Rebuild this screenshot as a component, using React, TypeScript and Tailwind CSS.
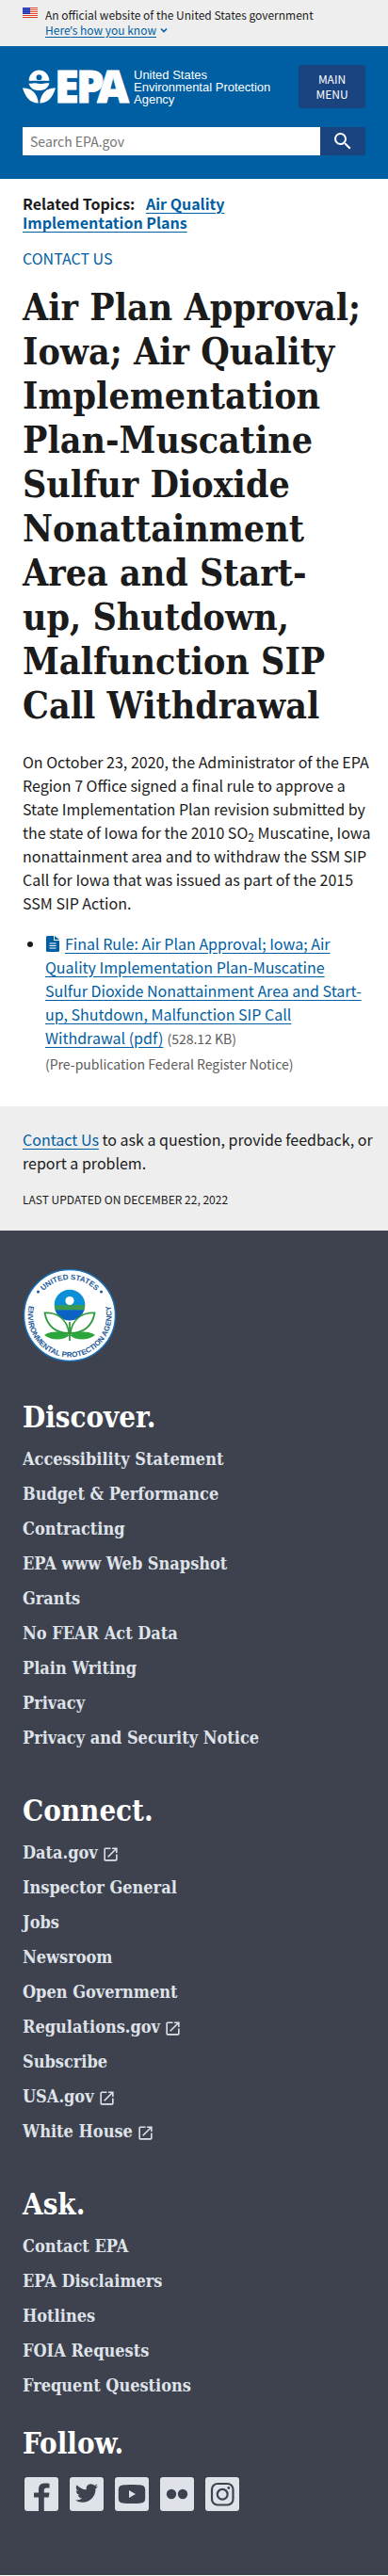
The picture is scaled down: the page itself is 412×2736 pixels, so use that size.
import type { ReactNode } from "react";

const link = "text-[#005ea2] underline underline-offset-3";

function Flag() {
  return (
    <svg className="mt-2 h-[11px] w-4 shrink-0" viewBox="0 0 16 11" aria-hidden="true">
      <rect width="16" height="11" fill="#fff" />
      {[0, 2, 4, 6, 8, 10].map((y) => (
        <rect key={y} y={y} width="16" height="1" fill="#db3e1f" />
      ))}
      <rect width="8" height="7" fill="#1e33b1" />
      {[1, 3, 5].map((y) => [1, 3, 5, 7].map((x) => <circle key={x + "-" + y} cx={x - 0.1} cy={y + 0.4} r="0.4" fill="#fff" />))}
    </svg>
  );
}

function EpaLogo() {
  return (
    <svg className="h-9 w-[115px] shrink-0 overflow-visible" viewBox="0 0 115 36" role="img" aria-label="EPA" fill="#fff">
      <path
        fillRule="evenodd"
        d="M6.500 11.500C7.500 4.500 11.500.5 17.500.5S27.500 4.500 28.500 11.500c-2 .8-4 .2-6.500.3-3 .2-5.500.2-9 0-2.300-.1-4.500.5-6.500-.3ZM17.500 5.300a3 3 0 1 0 0 6 3 3 0 1 0 0-6Z"
      />
      <path d="M6.500 14.500c2.500.8 4.500-.3 7-.2 2.800.1 4.500 1.200 7.500.6 2.500-.5 5-.9 7.500-.4C27 19.500 23.500 22 17.500 22S8 19.500 6.500 14.500Z" />
      <path d="M0 19.500C8 19 15.500 23.500 16.800 35.500 7.500 35.500 3 29 0 19.500Z" />
      <path d="M35 19.500c-8-.5-15.500 4-16.800 16 9.300 0 13.800-6.500 16.800-16Z" />
      <g fontFamily="Open Sans, Noto Sans, sans-serif" fontWeight="800" fontSize="47" stroke="#fff" strokeWidth="0.800">
        <text x="34" y="35">E</text>
        <text x="57" y="35">P</text>
        <text x="79" y="35">A</text>
      </g>
    </svg>
  );
}

function Seal() {
  return (
    <svg className="size-[100px]" viewBox="0 0 100 100" role="img" aria-label="United States Environmental Protection Agency seal">
      <defs>
        <path id="seal-top" d="M12 50a38 38 0 0 1 76 0" />
        <path id="seal-bottom" d="M12.200 26.500A44.500 44.500 0 1 0 87.800 26.500" />
      </defs>
      <circle cx="50" cy="50" r="48.500" fill="#fff" stroke="#1a6fb5" strokeWidth="1.500" />
      <g fill="#1c5a97" fontFamily="Liberation Sans, sans-serif" fontWeight="700" fontSize="8">
        <text textAnchor="middle">
          <textPath href="#seal-top" startOffset="50%">UNITED STATES</textPath>
        </text>
        <text textAnchor="middle">
          <textPath href="#seal-bottom" startOffset="50%">ENVIRONMENTAL PROTECTION AGENCY</textPath>
        </text>
      </g>
      <circle cx="16.500" cy="25" r="1.500" fill="#1c5a97" />
      <circle cx="83.500" cy="25" r="1.500" fill="#1c5a97" />
      <circle cx="50" cy="39" r="16.300" fill="#0b8fd6" />
      <path d="M33.800 39.500c3-1.500 4 1.500 7-.2s4.500.8 7.500 0 4 1 7-.2 4 1.200 10.900-.3q0 3-.8 5.700H34.600Z" fill="#3d9b50" />
      <path d="M34.600 44.500h30.800a16.300 16.300 0 0 1-30.800 0Z" fill="#0b62c4" />
      <circle cx="50" cy="34.500" r="4.600" fill="#fff" />
      <g fill="#fff" stroke="#2f9a3c" strokeWidth="1.800">
        <path d="M23.500 47.500c12-.5 23 5 26 21.500C36 69 26 62 23.500 47.500Z" />
        <path d="M76.500 47.500c-12-.5-23 5-26 21.500C64 69 74 62 76.500 47.500Z" />
      </g>
      <path d="M23 71c8-5 19-4 27 0 8-4 19-5 27 0-8 6-20 6-27 0-7 6-19 6-27 0Z" fill="#2aa63a" />
      <path d="M50 57v20" stroke="#2f9a3c" strokeWidth="1.800" />
    </svg>
  );
}

function ExternalIcon() {
  return (
    <svg className="ml-1 inline-block size-[19px] align-[-5px]" viewBox="0 0 24 24" fill="currentColor" aria-hidden="true">
      <path d="M19 19H5V5h7V3H5a2 2 0 0 0-2 2v14a2 2 0 0 0 2 2h14c1.100 0 2-.9 2-2v-7h-2v7zM14 3v2h3.590l-9.830 9.830 1.410 1.410L19 6.410V10h2V3h-7z" />
    </svg>
  );
}

function FooterHeading({ children }: { children: ReactNode }) {
  return <h2 className="font-['DejaVu_Serif_Condensed','DejaVu_Serif',serif] text-[31px] leading-9 font-bold text-white">{children}</h2>;
}

function FooterList({ title, items }: { title: string; items: [string, boolean?][] }) {
  return (
    <section>
      <FooterHeading>{title}</FooterHeading>
      <ul className="mt-4 flex flex-col gap-[15px]">
        {items.map(([name, external]) => (
          <li key={name} className="h-[22px] font-['DejaVu_Serif_Condensed','DejaVu_Serif',serif] text-[18px] leading-[22px] font-bold text-[#dfe3e9]">
            <a href="#">
              {name}
              {external && <ExternalIcon />}
            </a>
          </li>
        ))}
      </ul>
    </section>
  );
}

function Tile({ label, children }: { label: string; children: ReactNode }) {
  return (
    <a href="#" aria-label={label} className="block size-9 overflow-hidden rounded-[3px] bg-[#dfe3e9] text-[#3e424e]">
      <svg className="size-9" viewBox="0 0 36 36" fill="currentColor" aria-hidden="true">
        {children}
      </svg>
    </a>
  );
}

export default function App() {
  return (
    <div className="bg-white font-['Noto_Sans_CJK_SC',sans-serif] text-[16px] leading-[25px] text-[#1b1b1b]">
      <div className="flex gap-2 bg-[#eeeeee] px-6 pb-[9px] text-[12px] leading-4">
        <Flag />
        <div className="pt-2">
          <p>An official website of the United States government</p>
          <button className="flex h-4 items-center gap-1 text-[#005ea2]">
            <span className="underline underline-offset-2">
              Here<span className="font-['Noto_Sans',sans-serif]">’</span>s how you know
            </span>
            <svg className="size-2" viewBox="0 0 8 8" fill="none" stroke="currentColor" strokeWidth="1.600" aria-hidden="true">
              <path d="m1 2.500 3 3 3-3" />
            </svg>
          </button>
        </div>
      </div>

      <header className="bg-[#005ea2] px-6 pt-5 pb-[25px]">
        <div className="flex items-center justify-between">
          <a href="#" className="flex items-center gap-[3px] text-white">
            <EpaLogo />
            <span className="font-['Liberation_Sans',sans-serif] text-[13px] leading-[13px]">
              United States
              <br />
              Environmental Protection
              <br />
              Agency
            </span>
          </a>
          <button className="h-[46px] w-[71px] shrink-0 rounded-xs bg-[#1a4480] px-4 text-[12px] leading-4 text-white">MAIN MENU</button>
        </div>
        <form className="mt-5 flex h-[30px]">
          <input
            type="search"
            aria-label="Search"
            placeholder="Search EPA.gov"
            className="min-w-0 flex-1 bg-white px-2 text-[14px] placeholder:text-[#757575]"
          />
          <button type="button" aria-label="Search" className="flex w-12 items-center justify-center rounded-r-xs bg-[#1a4480] text-white">
            <svg className="size-6" viewBox="0 0 24 24" fill="currentColor" aria-hidden="true">
              <path d="M15.500 14h-.79l-.28-.27A6.470 6.470 0 0 0 16 9.500 6.500 6.500 0 1 0 9.500 16c1.610 0 3.090-.59 4.230-1.570l.27.28v.79l5 4.990L20.490 19l-4.990-5zm-6 0C7.010 14 5 11.990 5 9.500S7.010 5 9.500 5 14 7.010 14 9.500 11.990 14 9.500 14z" />
            </svg>
          </button>
        </form>
      </header>

      <main className="px-6 pt-4 pb-8">
        <p className="max-w-[240px] leading-5 font-bold">
          Related Topics: <a href="#" className={link + " ml-2"}>Air Quality Implementation Plans</a>
        </p>
        <a href="#" className="mt-4 block text-[#005ea2]">CONTACT US</a>
        <h1 className="mt-4 font-['DejaVu_Serif_Condensed','DejaVu_Serif',serif] text-[39px] leading-[47px] font-bold">
          Air Plan Approval; Iowa; Air Quality Implementation Plan-Muscatine Sulfur Dioxide Nonattainment Area and Start-
          <br />
          up, Shutdown, Malfunction SIP Call Withdrawal
        </h1>
        <p className="-mr-3 mt-6">
          On October 23, 2020, the Administrator of the EPA
          <br />
          Region 7 Office signed a final rule to approve a
          <br />
          State Implementation Plan revision submitted by
          <br />
          the state of Iowa for the 2010 SO<sub>2</sub> Muscatine, Iowa
          <br />
          nonattainment area and to withdraw the SSM SIP
          <br />
          Call for Iowa that was issued as part of the 2015
          <br />
          SSM SIP Action.
        </p>
        <ul className="mt-[18px] list-disc pl-6">
          <li>
            <svg className="mr-[6px] ml-px inline-block h-[17px] w-[14px] align-[-2px] text-[#005ea2]" viewBox="0 0 14 17" aria-hidden="true">
              <path fill="currentColor" d="M1.500 0H8v5h6v10.500a1.500 1.500 0 0 1-1.500 1.500h-11A1.500 1.500 0 0 1 0 15.500v-14A1.500 1.500 0 0 1 1.500 0ZM9 0l5 4H9Z" />
              <path stroke="#fff" strokeWidth="1.200" d="M3.500 8h7M3.500 10.500h7M3.500 13h7" />
            </svg>
            <a href="#" className={link}>
              Final Rule: Air Plan Approval; Iowa; Air
              <br />
              Quality Implementation Plan-Muscatine
              <br />
              Sulfur Dioxide Nonattainment Area and Start-
              <br />
              up, Shutdown, Malfunction SIP Call
              <br />
              Withdrawal (pdf)
            </a>
            <span className="ml-1 text-[14px] text-[#5c5c5c]">(528.12 KB)</span>
            <div className="mt-[2px] text-[14px] text-[#5c5c5c]">(Pre-publication Federal Register Notice)</div>
          </li>
        </ul>
      </main>

      <div className="bg-[#eeeeee] px-6 pt-[23px] pb-[21px]">
        <p className="-mr-3">
          <a href="#" className={link}>Contact Us</a> to ask a question, provide feedback, or
          <br />
          report a problem.
        </p>
        <p className="mt-[13px] text-[12px]">LAST UPDATED ON DECEMBER 22, 2022</p>
      </div>

      <footer className="bg-[#3e424e] px-6 pt-10 pb-[68px]">
        <Seal />
        <div className="mt-10 flex flex-col gap-12">
          <FooterList
            title="Discover."
            items={[
              ["Accessibility Statement"],
              ["Budget & Performance"],
              ["Contracting"],
              ["EPA www Web Snapshot"],
              ["Grants"],
              ["No FEAR Act Data"],
              ["Plain Writing"],
              ["Privacy"],
              ["Privacy and Security Notice"],
            ]}
          />
          <FooterList
            title="Connect."
            items={[
              ["Data.gov", true],
              ["Inspector General"],
              ["Jobs"],
              ["Newsroom"],
              ["Open Government"],
              ["Regulations.gov", true],
              ["Subscribe"],
              ["USA.gov", true],
              ["White House", true],
            ]}
          />
          <FooterList title="Ask." items={[["Contact EPA"], ["EPA Disclaimers"], ["Hotlines"], ["FOIA Requests"], ["Frequent Questions"]]} />
        </div>
        <section className="mt-8">
          <FooterHeading>Follow.</FooterHeading>
          <div className="mt-[18px] flex gap-3 pl-[2px]">
            <Tile label="Facebook">
              <path d="M15 36V21.500h-5V16.500h5v-3.500c0-4.500 2.500-6.500 6.500-6.500 2 0 4 .2 5 .3v4.700h-3c-2 0-2.700 1-2.700 2.500v2.500h5.700l-.8 5h-4.900V36Z" />
            </Tile>
            <Tile label="Twitter">
              <path transform="translate(6 5)" d="M23.950 4.570a10 10 0 0 1-2.820.77 4.960 4.960 0 0 0 2.160-2.720c-.95.550-2 .95-3.130 1.180a4.920 4.920 0 0 0-8.380 4.480C7.690 8.090 4.070 6.130 1.640 3.160a4.920 4.920 0 0 0 1.520 6.570 4.900 4.900 0 0 1-2.230-.61v.06a4.920 4.920 0 0 0 3.950 4.830 5 5 0 0 1-2.210.08 4.940 4.940 0 0 0 4.600 3.420A9.870 9.870 0 0 1 0 19.540a13.990 13.990 0 0 0 7.550 2.210c9.050 0 14-7.500 14-13.980 0-.21 0-.42-.02-.63a9.940 9.940 0 0 0 2.460-2.550Z" />
            </Tile>
            <Tile label="YouTube">
              <path fillRule="evenodd" d="M8 8.500c5-.7 15-.7 20 0 3 .4 4.200 2 4.200 5v9c0 3-1.200 4.600-4.200 5-5 .7-15 .7-20 0-3-.4-4.200-2-4.200-5v-9c0-3 1.200-4.600 4.200-5Zm7 5.500v8l7-4Z" />
            </Tile>
            <Tile label="Flickr">
              <circle cx="12" cy="18" r="5.200" />
              <circle cx="24" cy="18" r="5.200" />
            </Tile>
            <Tile label="Instagram">
              <g fill="none" stroke="currentColor" strokeWidth="2.200">
                <rect x="7" y="7" width="22.500" height="22.500" rx="6" />
                <circle cx="18.200" cy="18.200" r="5.400" />
              </g>
              <circle cx="24.800" cy="11.500" r="1.400" />
            </Tile>
          </div>
        </section>
      </footer>
    </div>
  );
}
